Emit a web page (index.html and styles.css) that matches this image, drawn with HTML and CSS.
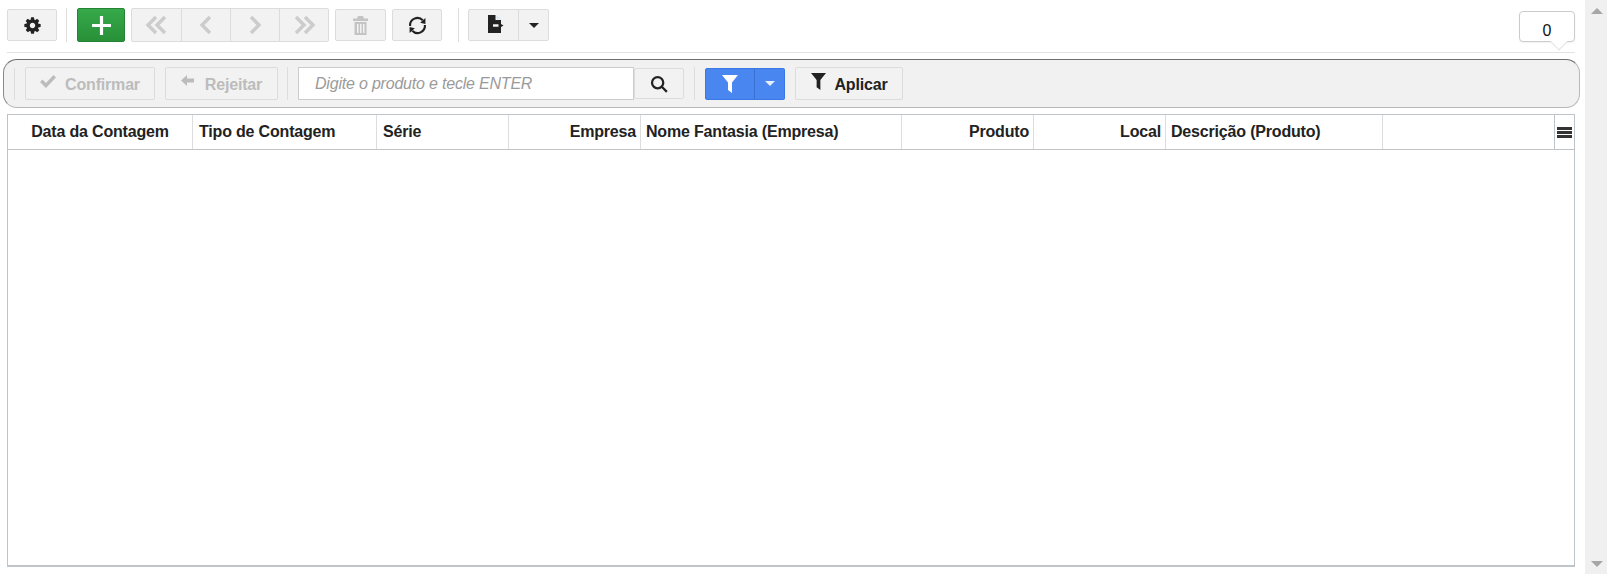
FILE: index.html
```html
<!DOCTYPE html>
<html lang="pt">
<head>
<meta charset="utf-8">
<title>Contagem</title>
<link rel="stylesheet" href="styles.css">
</head>
<body>
<div class="page">
  <main class="main">
    <div class="toolbar">
      <button class="btn btn-gear"><svg class="ic16" viewBox="0 0 1792 1792"><path d="M1152 896q0-106-75-181t-181-75-181 75-75 181 75 181 181 75 181-75 75-181zm512-109v222q0 12-8 23t-20 13l-185 28q-19 54-39 91 35 50 107 138 10 12 10 25t-9 23q-27 37-99 108t-94 71q-12 0-26-9l-138-108q-44 23-91 38-16 136-29 186-7 28-36 28h-222q-14 0-24.500-8.500t-11.500-21.500l-28-184q-49-16-90-37l-141 107q-10 9-25 9-14 0-25-11-126-114-165-168-7-10-7-23 0-12 8-23 15-21 51-66.500t54-70.500q-27-50-41-99l-183-27q-13-2-21-12.500t-8-23.500v-222q0-12 8-23t19-13l186-28q14-46 39-92-40-57-107-138-10-12-10-24 0-10 9-23 26-36 98.500-107.500t94.500-71.500q13 0 26 10l138 107q44-23 91-38 16-136 29-186 7-28 36-28h222q14 0 24.500 8.500t11.500 21.500l28 184q49 16 90 37l142-107q9-9 24-9 13 0 25 10 129 119 165 170 7 8 7 22 0 12-8 23-15 21-51 66.500t-54 70.500q26 50 41 98l183 28q13 2 21 12.500t8 23.500z"/></svg></button>
      <span class="sep sep-a"></span>
      <button class="btn btn-add"><svg class="ic18" viewBox="0 0 18 18"><path d="M7.500 0h3v7.500H18v3h-7.500V18h-3v-7.500H0v-3h7.500z"/></svg></button>
      <div class="group nav">
        <button class="btn seg"><svg class="ic-nav" viewBox="0 0 24 20"><path d="M11 2 3 10l8 8M20 2l-8 8 8 8"/></svg></button>
        <button class="btn seg"><svg class="ic-nav" viewBox="0 0 24 20"><path d="m16 2-8 8 8 8"/></svg></button>
        <button class="btn seg"><svg class="ic-nav" viewBox="0 0 24 20"><path d="m8 2 8 8-8 8"/></svg></button>
        <button class="btn seg"><svg class="ic-nav" viewBox="0 0 24 20"><path d="m4 2 8 8-8 8M13 2l8 8-8 8"/></svg></button>
      </div>
      <button class="btn btn-trash"><svg class="ic-trash" viewBox="0 0 15 19"><path d="M5 0h5l1 2.500h4v2.500H0V2.500h4zM1.500 6h12v13h-12zM4 8v9h1.500V8zm3 0v9h1.500V8zm3 0v9h1.500V8z" fill-rule="evenodd"/></svg></button>
      <button class="btn btn-refresh"><svg class="ic18" viewBox="0 0 18 18"><path class="ring" d="M2 9.500A7 7 0 0 1 14 4M16 8.500A7 7 0 0 1 4 14"/><path d="M11.500 6.500 16.500 2v5.500zM6.500 11.500 1.500 16v-5.500z"/></svg></button>
      <span class="sep sep-b"></span>
      <div class="group export">
        <button class="btn seg seg-export"><svg class="ic-export" viewBox="0 0 18 18"><path d="M1 0h7.500v5H14v13H1z"/><path class="notch" d="M9.500 0 14 4H9.500z"/><path class="stem" d="M6 10.500h7"/><path d="M11.500 7.500 16.500 10.500 11.500 13.500z"/></svg></button>
        <button class="btn seg seg-caret"><span class="caret"></span></button>
      </div>
      <div class="counter">0</div>
    </div>
    <div class="filterbar">
      <span class="sep sep-c"></span>
      <button class="btn btn-text btn-confirm"><svg class="ic-check" viewBox="0 0 16 13"><path d="M6 13 0 7l2.500-2.500L6 8l7.500-8L16 2.500z"/></svg><span class="lbl">Confirmar</span></button>
      <button class="btn btn-text btn-reject"><svg class="ic-back" viewBox="0 0 13 12"><path d="M6 0v3.500h7v4H6V11L0 5.500z"/></svg><span class="lbl">Rejeitar</span></button>
      <span class="sep sep-d"></span>
      <input class="search" type="text" placeholder="Digite o produto e tecle ENTER">
      <button class="btn btn-search"><svg class="ic-search" viewBox="0 0 16 16"><circle cx="6.800" cy="6.800" r="5"/><path d="m10.500 10.500 4.500 4.500"/></svg></button>
      <span class="sep sep-e"></span>
      <div class="group filter">
        <button class="btn seg seg-filter"><svg class="ic-funnel" viewBox="0 0 16 18"><path d="M0 0h16L10 7.500V18L6 15V7.500z"/></svg></button>
        <button class="btn seg seg-fcaret"><span class="caret caret-w"></span></button>
      </div>
      <button class="btn btn-apply"><svg class="ic-funnel2" viewBox="0 0 16 18"><path d="M0 0h16L10 7.500V18L6 15V7.500z"/></svg><span class="lbl">Aplicar</span></button>
    </div>
    <div class="grid">
      <div class="grid-head">
        <div class="col c1 center">Data da Contagem</div>
        <div class="col c2">Tipo de Contagem</div>
        <div class="col c3">Série</div>
        <div class="col c4 right">Empresa</div>
        <div class="col c5">Nome Fantasia (Empresa)</div>
        <div class="col c6 right">Produto</div>
        <div class="col c7 right">Local</div>
        <div class="col c8">Descrição (Produto)</div>
        <div class="col c9"></div>
        <div class="col c10"><span class="menu"></span></div>
      </div>
      <div class="grid-body"></div>
    </div>
  </main>
  <aside class="scrollbar">
    <span class="arrow-up"></span>
    <span class="arrow-down"></span>
  </aside>
</div>
</body>
</html>
```

FILE: styles.css
```css
* { box-sizing: border-box; }
html, body { margin: 0; height: 100%; overflow: hidden; background: #fff; }
body { font-family: "Liberation Sans", Arial, sans-serif; font-size: 14px; color: #222; }
.page { display: flex; height: 574px; }
.main { width: 1585px; padding: 0 10px 7px 3px; display: flex; flex-direction: column; }
.toolbar { display: flex; align-items: center; height: 53px; margin-left: 4px; padding: 8px 0 10px; border-bottom: 1px solid #e3e3e3; }
.btn { display: inline-flex; align-items: center; justify-content: center; height: 32px; padding: 0; border: 1px solid #dcdcdc; border-radius: 2px; background: #f2f2f2; color: #222; font: inherit; }
.sep { width: 1px; height: 34px; background: #ddd; flex: none; }
.btn-gear { width: 50px; }
.sep-a { margin: 0 10px 0 9px; }
.btn-add { width: 48px; height: 34px; background: linear-gradient(#36a94a, #289038); border-color: #258234; }
.btn-add svg { fill: #fff; }
.group { display: flex; }
.nav { margin-left: 6px; height: 34px; border: 1px solid #dcdcdc; border-radius: 2px; background: #f2f2f2; }
.nav .seg { height: 32px; width: 49px; border: 0; border-right: 1px solid #dcdcdc; border-radius: 0; background: none; }
.nav .seg:first-child { width: 50px; }
.nav .seg:last-child { width: 48px; border-right: 0; }
.ic16 { width: 19px; height: 19px; fill: #222; }
.ic18 { width: 19px; height: 19px; fill: #222; }
.ic-nav { width: 24px; height: 20px; fill: none; stroke: #cccccc; stroke-width: 3.400; }
.btn-trash { width: 51px; margin-left: 6px; }
.ic-trash { width: 15px; height: 19px; fill: #c4c4c4; }
.btn-refresh { width: 50px; margin-left: 6px; }
.ring { fill: none; stroke: #222; stroke-width: 2; }
.sep-b { margin: 0 9px 0 16px; }
.seg-export { width: 51px; border-radius: 2px 0 0 2px; }
.seg-caret { width: 30px; border-left: 0; border-radius: 0 2px 2px 0; }
.ic-export { width: 18px; height: 18px; fill: #222; margin: -3px 0 0 4px; }
.notch { fill: #dce6f2; }
.stem { fill: none; stroke: #f2f2f2; stroke-width: 2.500; }
.caret { width: 0; height: 0; border-left: 5px solid transparent; border-right: 5px solid transparent; border-top: 5px solid #222; }
.caret-w { border-top-color: #e8f0fe; }
.counter { position: relative; margin-left: auto; margin-top: 3px; width: 56px; height: 31px; padding-top: 10px; border: 1px solid #ccc; border-radius: 4px; background: #fff; text-align: center; font-size: 16px; line-height: 18px; color: #111; box-shadow: 0 1px 2px rgba(0,0,0,.06); }
.counter::after { content: ""; position: absolute; left: 33px; bottom: -7px; width: 11px; height: 11px; background: #fff; border-right: 1px solid #e4e4e4; border-bottom: 1px solid #e4e4e4; transform: rotate(45deg); }
.filterbar { display: flex; align-items: center; height: 49px; margin-top: 6px; margin-right: -5px; border: 1px solid #b8b8b8; border-top-color: #6e6e6e; border-left-color: #8a8a8a; border-radius: 14px; background: #f1f1f1; }
.sep-c { margin: 0 10px 0 10px; height: 32px; }
.btn-text { height: 33px; font-weight: 700; font-size: 16px; letter-spacing: -.18px; color: #bcbcbc; }
.lbl { padding-top: 2px; }
.btn-confirm { width: 130px; }
.ic-check { width: 16px; height: 13px; fill: #bcbcbc; margin: -4px 9px 0 0; }
.btn-reject { width: 113px; margin-left: 10px; }
.ic-back { width: 13px; height: 12px; fill: #bcbcbc; margin: -6px 11px 0 0; }
.sep-d { margin: 0 10px 0 9px; height: 33px; }
.search { width: 336px; height: 33px; padding: 0 16px; border: 1px solid #ccc; background: #fff; font: italic 16px "Liberation Sans", Arial, sans-serif; letter-spacing: -.2px; outline: 0; }
.search::placeholder { color: #9a9a9a; opacity: 1; }
.btn-search { width: 50px; height: 31px; margin-right: 10px; }
.ic-search { width: 18px; height: 18px; fill: none; stroke: #222; stroke-width: 2; }
.sep-e { height: 33px; margin-right: 10px; }
.seg-filter { width: 50px; height: 32px; background: #4a86f0; border-color: #3b78e7; border-radius: 2px 0 0 2px; }
.seg-fcaret { width: 31px; height: 32px; background: #4a86f0; border-color: #3b78e7; border-left-color: #3a70d0; border-radius: 0 2px 2px 0; margin-left: -1px; }
.ic-funnel { width: 16px; height: 18px; fill: #fff; }
.btn-apply { width: 108px; height: 33px; margin-left: 10px; font-weight: 700; font-size: 16px; letter-spacing: -.18px; color: #222; }
.ic-funnel2 { width: 15px; height: 17px; fill: #222; margin: -5px 9px 0 0; }
.grid { flex: 1; margin-top: 6px; margin-left: 4px; border: 1px solid #bfc4c8; border-bottom-width: 2px; display: flex; flex-direction: column; }
.grid-head { display: flex; height: 35px; border-bottom: 1px solid #c0c4c7; }
.col { flex: none; display: flex; align-items: center; padding: 0 6px 1px; border-right: 1px solid #ddd; font-weight: 700; font-size: 16px; letter-spacing: -.18px; color: #222; white-space: nowrap; }
.center { justify-content: center; }
.right { justify-content: flex-end; padding-right: 4px; }
.c1 { width: 185px; }
.c2 { width: 184px; }
.c3 { width: 132px; }
.c4 { width: 132px; }
.c5 { width: 261px; padding-left: 5px; }
.c6 { width: 132px; }
.c7 { width: 132px; }
.c8 { width: 217px; padding-left: 5px; }
.c9 { width: 172px; border-right-color: #bfc4c8; }
.c10 { flex: 1; border-right: 0; padding: 0; justify-content: center; }
.menu { display: block; width: 15px; height: 11px; border-top: 3px solid #333; border-bottom: 3px solid #333; position: relative; }
.menu::after { content: ""; position: absolute; left: 0; right: 0; top: 1px; height: 3px; background: #333; }
.grid-body { flex: 1; }
.scrollbar { width: 22px; background: #f0f0f0; display: flex; flex-direction: column; justify-content: space-between; align-items: center; padding: 8px 0 7px 2px; }
.arrow-up { border-left: 6px solid transparent; border-right: 6px solid transparent; border-bottom: 6px solid #a6a6a6; }
.arrow-down { border-left: 6px solid transparent; border-right: 6px solid transparent; border-top: 6px solid #a6a6a6; }
```
